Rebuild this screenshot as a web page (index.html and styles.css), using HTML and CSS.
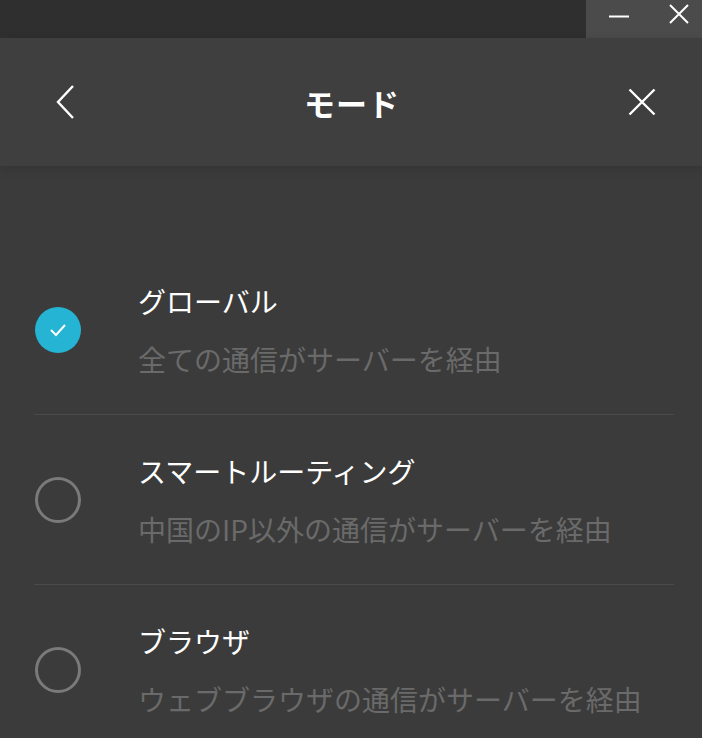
FILE: index.html
```html
<!DOCTYPE html>
<html lang="ja">
<head>
<meta charset="utf-8">
<link rel="stylesheet" href="styles.css">
</head>
<body>
<div class="titlebar">
  <div class="win-controls">
    <span class="win-btn">
      <svg width="22" height="22" viewBox="0 0 22 22"><path d="M1 13.5H21" stroke="#fff" stroke-width="2"/></svg>
    </span>
    <span class="win-btn">
      <svg width="22" height="22" viewBox="0 0 22 22"><path d="M2 2L20 20M20 2L2 20" stroke="#fff" stroke-width="2"/></svg>
    </span>
  </div>
</div>
<header class="header">
  <button class="icon-btn">
    <svg width="20" height="34" viewBox="0 0 20 34"><path d="M17 1L2 17L17 33" fill="none" stroke="#fff" stroke-width="2.4"/></svg>
  </button>
  <h1 class="title">モード</h1>
  <button class="icon-btn">
    <svg width="28" height="28" viewBox="0 0 28 28"><path d="M1.5 1.5L26.5 26.5M26.5 1.5L1.5 26.5" fill="none" stroke="#fff" stroke-width="2.4"/></svg>
  </button>
</header>
<main class="list">
  <div class="item">
    <span class="radio checked">
      <svg width="18" height="14" viewBox="0 0 18 14"><path d="M2 7L7 12L16 2" fill="none" stroke="#fff" stroke-width="2"/></svg>
    </span>
    <div class="text">
      <div class="name">グローバル</div>
      <div class="desc">全ての通信がサーバーを経由</div>
    </div>
  </div>
  <div class="item">
    <span class="radio"></span>
    <div class="text">
      <div class="name">スマートルーティング</div>
      <div class="desc">中国のIP以外の通信がサーバーを経由</div>
    </div>
  </div>
  <div class="item last">
    <span class="radio"></span>
    <div class="text">
      <div class="name">ブラウザ</div>
      <div class="desc">ウェブブラウザの通信がサーバーを経由</div>
    </div>
  </div>
</main>
</body>
</html>
```
FILE: styles.css
```css
html, body {
  margin: 0;
  padding: 0;
}
body {
  width: 702px;
  height: 738px;
  overflow: hidden;
  background: #3b3b3b;
  font-family: "Noto Sans CJK JP", "Noto Sans", sans-serif;
  color: #fff;
}
.titlebar {
  height: 38px;
  background: #2f2f2f;
  display: flex;
  justify-content: flex-end;
}
.win-controls {
  width: 116px;
  background: #4b4b4b;
  display: flex;
  align-items: flex-start;
  justify-content: space-between;
  padding: 3px 12px 0 22px;
  box-sizing: border-box;
}
.win-btn {
  display: flex;
}
.header {
  position: relative;
  height: 128px;
  background: #3f3f3f;
  display: flex;
  align-items: center;
  justify-content: space-between;
  padding: 0 46px 0 56px;
  box-sizing: border-box;
  box-shadow: 0 3px 10px rgba(0, 0, 0, 0.12);
}
.icon-btn {
  background: none;
  border: 0;
  padding: 0;
  display: flex;
}
.title {
  margin: 0;
  font-size: 31px;
  font-weight: 700;
  letter-spacing: 1px;
}
.list {
  margin: 0 28px 0 34px;
  padding-top: 79px;
}
.item {
  display: flex;
  align-items: center;
  height: 169px;
  border-bottom: 1px solid #4a4a4a;
}
.item.last {
  border-bottom: 0;
}
.radio {
  width: 46px;
  height: 46px;
  box-sizing: border-box;
  border: 3px solid #7a7a7a;
  border-radius: 50%;
  margin-left: 1px;
  flex: none;
  display: flex;
  align-items: center;
  justify-content: center;
}
.radio.checked {
  border: 0;
  background: #25b4d4;
}
.text {
  margin-left: 57px;
}
.name {
  font-size: 28px;
  line-height: 40px;
  color: #fff;
}
.desc {
  margin-top: 18px;
  font-size: 28px;
  line-height: 40px;
  color: #6a6a6a;
}
```
